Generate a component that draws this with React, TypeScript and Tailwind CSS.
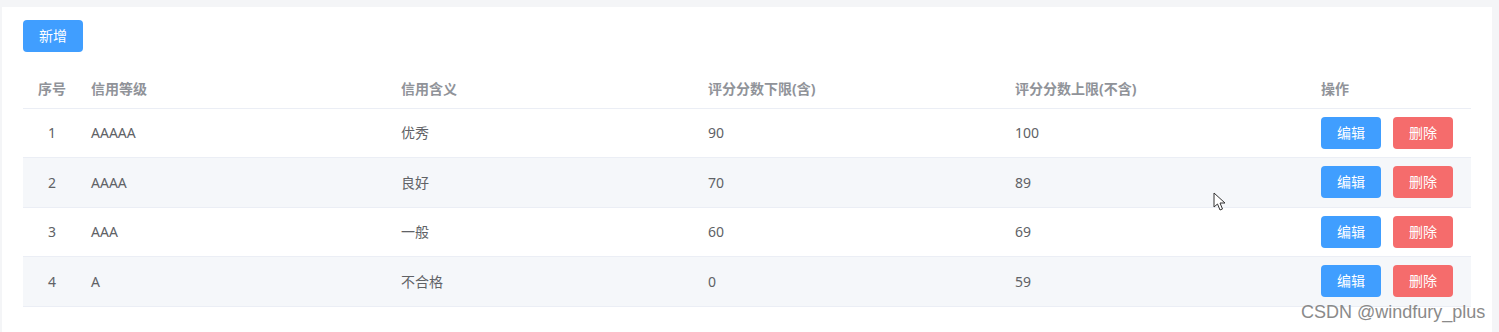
import React from "react";

const rows = [
  { id: 1, level: "AAAAA", meaning: "优秀", low: "90", high: "100" },
  { id: 2, level: "AAAA", meaning: "良好", low: "70", high: "89" },
  { id: 3, level: "AAA", meaning: "一般", low: "60", high: "69" },
  { id: 4, level: "A", meaning: "不合格", low: "0", high: "59" },
];

const font = { fontFamily: '"Noto Sans", "Noto Sans CJK SC", sans-serif' };

export default function App() {
  return (
    <div className="relative w-[1499px] h-[332px] overflow-hidden bg-[#f4f5f7] pl-[2px] pt-[7px] pr-[7px]" style={font}>
      <div className="h-[325px] bg-white pl-[21px] pr-[21px] pt-[13px]">
        <button className="h-[32px] w-[60px] rounded-[4px] bg-[#409eff] text-[14px] text-white leading-none">新增</button>
        <table className="mt-[18px] w-[1448px] table-fixed border-collapse text-[14px]">
          <colgroup>
            <col className="w-[58px]" />
            <col className="w-[310px]" />
            <col className="w-[307px]" />
            <col className="w-[307px]" />
            <col className="w-[306px]" />
            <col className="w-[160px]" />
          </colgroup>
          <thead>
            <tr className="h-[38px] border-b border-[#ebeef5] text-[#909399] font-bold">
              <th className="text-center font-bold">序号</th>
              <th className="px-[10px] text-left font-bold">信用等级</th>
              <th className="px-[10px] text-left font-bold">信用含义</th>
              <th className="px-[10px] text-left font-bold">评分分数下限(含)</th>
              <th className="px-[10px] text-left font-bold">评分分数上限(不含)</th>
              <th className="px-[10px] text-left font-bold">操作</th>
            </tr>
          </thead>
          <tbody className="text-[#606266]">
            {rows.map((r, i) => (
              <tr key={r.id} className={`h-[49.5px] border-b border-[#ebeef5] ${i % 2 === 1 ? "bg-[#f5f7fa]" : "bg-white"}`}>
                <td className="text-center">{r.id}</td>
                <td className="px-[10px]">{r.level}</td>
                <td className="px-[10px]">{r.meaning}</td>
                <td className="px-[10px]">{r.low}</td>
                <td className="px-[10px]">{r.high}</td>
                <td className="px-[10px]">
                  <div className="flex gap-[12px]">
                    <button className="h-[32px] w-[60px] rounded-[4px] bg-[#409eff] text-[14px] text-white leading-none">编辑</button>
                    <button className="h-[32px] w-[60px] rounded-[4px] bg-[#f56c6c] text-[14px] text-white leading-none">删除</button>
                  </div>
                </td>
              </tr>
            ))}
          </tbody>
        </table>
      </div>
      <svg className="absolute left-[1213px] top-[192px]" width="14" height="20" viewBox="0 0 14 20">
        <path d="M1 1 L1 15 L4.5 12 L7 18 L9.5 17 L7 11 L12 11 Z" fill="white" stroke="#333" strokeWidth="1" strokeLinejoin="round" />
      </svg>
      <div className="absolute left-[1301px] top-[300px] text-[18px] leading-[24px] text-[#8a8a8a]" style={{ fontFamily: '"Liberation Sans", Arial, sans-serif' }}>
        CSDN @windfury_plus
      </div>
    </div>
  );
}
